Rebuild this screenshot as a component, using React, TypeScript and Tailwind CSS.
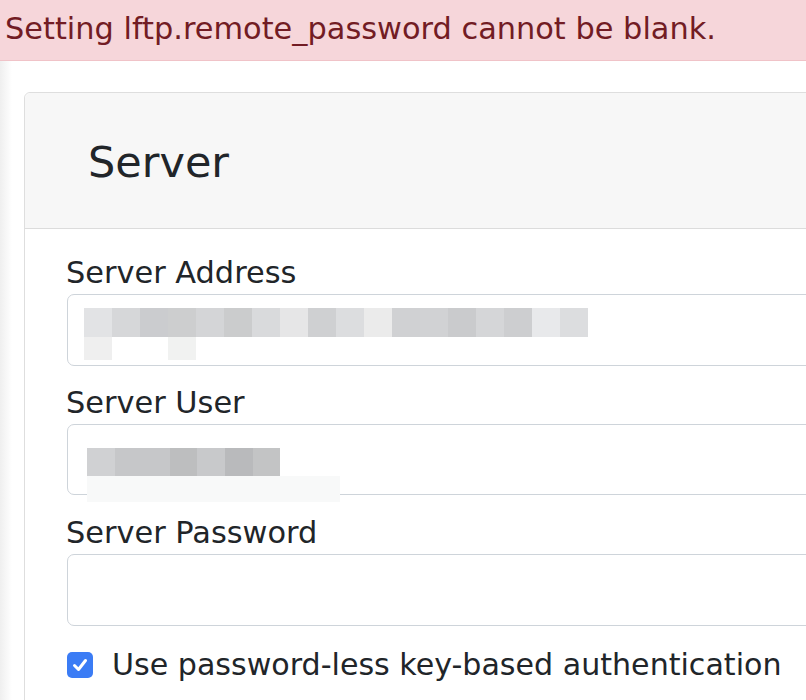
import React from "react";

const row1 = [
  "#e2e3e5", "#d6d7d9", "#cbcccf", "#cdcecf", "#d4d5d7", "#cbcccd", "#d9dadc", "#e6e6e7", "#cfd0d2",
  "#dcdddf", "#ebebeb", "#d0d1d3", "#d1d2d4", "#cacbcd", "#d5d6d8", "#cdced0", "#e8e9eb", "#dcdddf",
];
const row2 = ["#efefef", "transparent", "transparent", "#f1f2f1"];
const user = ["#d0d1d3", "#c6c7c9", "#c6c7c9", "#bdbebf", "#c8c9cb", "#b9babc", "#c3c4c5"];

function Label({ children }: { children: React.ReactNode }) {
  return <div className="text-[30.4px] leading-[44px] pt-[1px] -mb-[1px] text-[#212529] -ml-[1px]">{children}</div>;
}

export default function App() {
  return (
    <div
      className="relative w-[806px] h-[700px] overflow-hidden bg-white"
      style={{ fontFamily: '"DejaVu Sans", Verdana, sans-serif' }}
    >
      <div className="h-[61px] bg-[#f6d6da] border-b border-[#f0c3c8] pl-[5px] pt-[7px] text-[30.4px] leading-[44px] text-[#721c24] whitespace-nowrap">
        Setting lftp.remote_password cannot be blank.
      </div>
      <div className="absolute left-0 top-[61px] w-[12px] h-[639px] bg-gradient-to-r from-[#efefef] to-white" />
      <div className="relative ml-[24px] mt-[31px] w-[860px] h-[800px] border border-[#dedede] rounded-[6px] bg-white">
        <div className="h-[136px] bg-[#f7f7f7] border-b border-[#dcdcdc] rounded-t-[6px] pl-[63px] pt-[44px] text-[43px] leading-[50px] text-[#212529]">
          Server
        </div>
        <div className="pl-[42px] pt-[21px] flex flex-col">
          <Label>Server Address</Label>
          <div className="relative h-[72px] border border-[#ced4da] rounded-[7px] bg-white">
            <div className="absolute left-[16px] top-[13px] flex">
              {row1.map((c, i) => (
                <div key={i} className="w-[28px] h-[29px]" style={{ backgroundColor: c }} />
              ))}
            </div>
            <div className="absolute left-[16px] top-[42px] flex">
              {row2.map((c, i) => (
                <div key={i} className="w-[28px] h-[23px]" style={{ backgroundColor: c }} />
              ))}
            </div>
          </div>
          <div className="h-[14px]" />
          <Label>Server User</Label>
          <div className="relative h-[71px] border border-[#ced4da] rounded-[7px] bg-white">
            <div className="absolute left-[19px] top-[23px] flex">
              {user.map((c, i) => (
                <div key={i} className="w-[27.6px] h-[28px]" style={{ backgroundColor: c }} />
              ))}
            </div>
            <div className="absolute left-[19px] top-[51px] w-[253px] h-[26px] bg-[#f8f9f9]" />
          </div>
          <div className="h-[15px]" />
          <Label>Server Password</Label>
          <div className="h-[72px] border border-[#ced4da] rounded-[7px] bg-white" />
          <div className="h-[17px]" />
          <div className="flex items-center h-[44px]">
            <div className="w-[26px] h-[26px] -mt-[1px] rounded-[5px] bg-[#3b7cf5] flex items-center justify-center">
              <svg width="18" height="18" viewBox="0 0 18 18">
                <path d="M3.5 9.5 L7.5 13.5 L14.5 4.5" fill="none" stroke="white" strokeWidth="3" strokeLinecap="round" strokeLinejoin="round" />
              </svg>
            </div>
            <span className="ml-[19px] text-[30.1px] leading-[44px] text-[#212529] whitespace-nowrap">
              Use password-less key-based authentication
            </span>
          </div>
        </div>
      </div>
    </div>
  );
}
